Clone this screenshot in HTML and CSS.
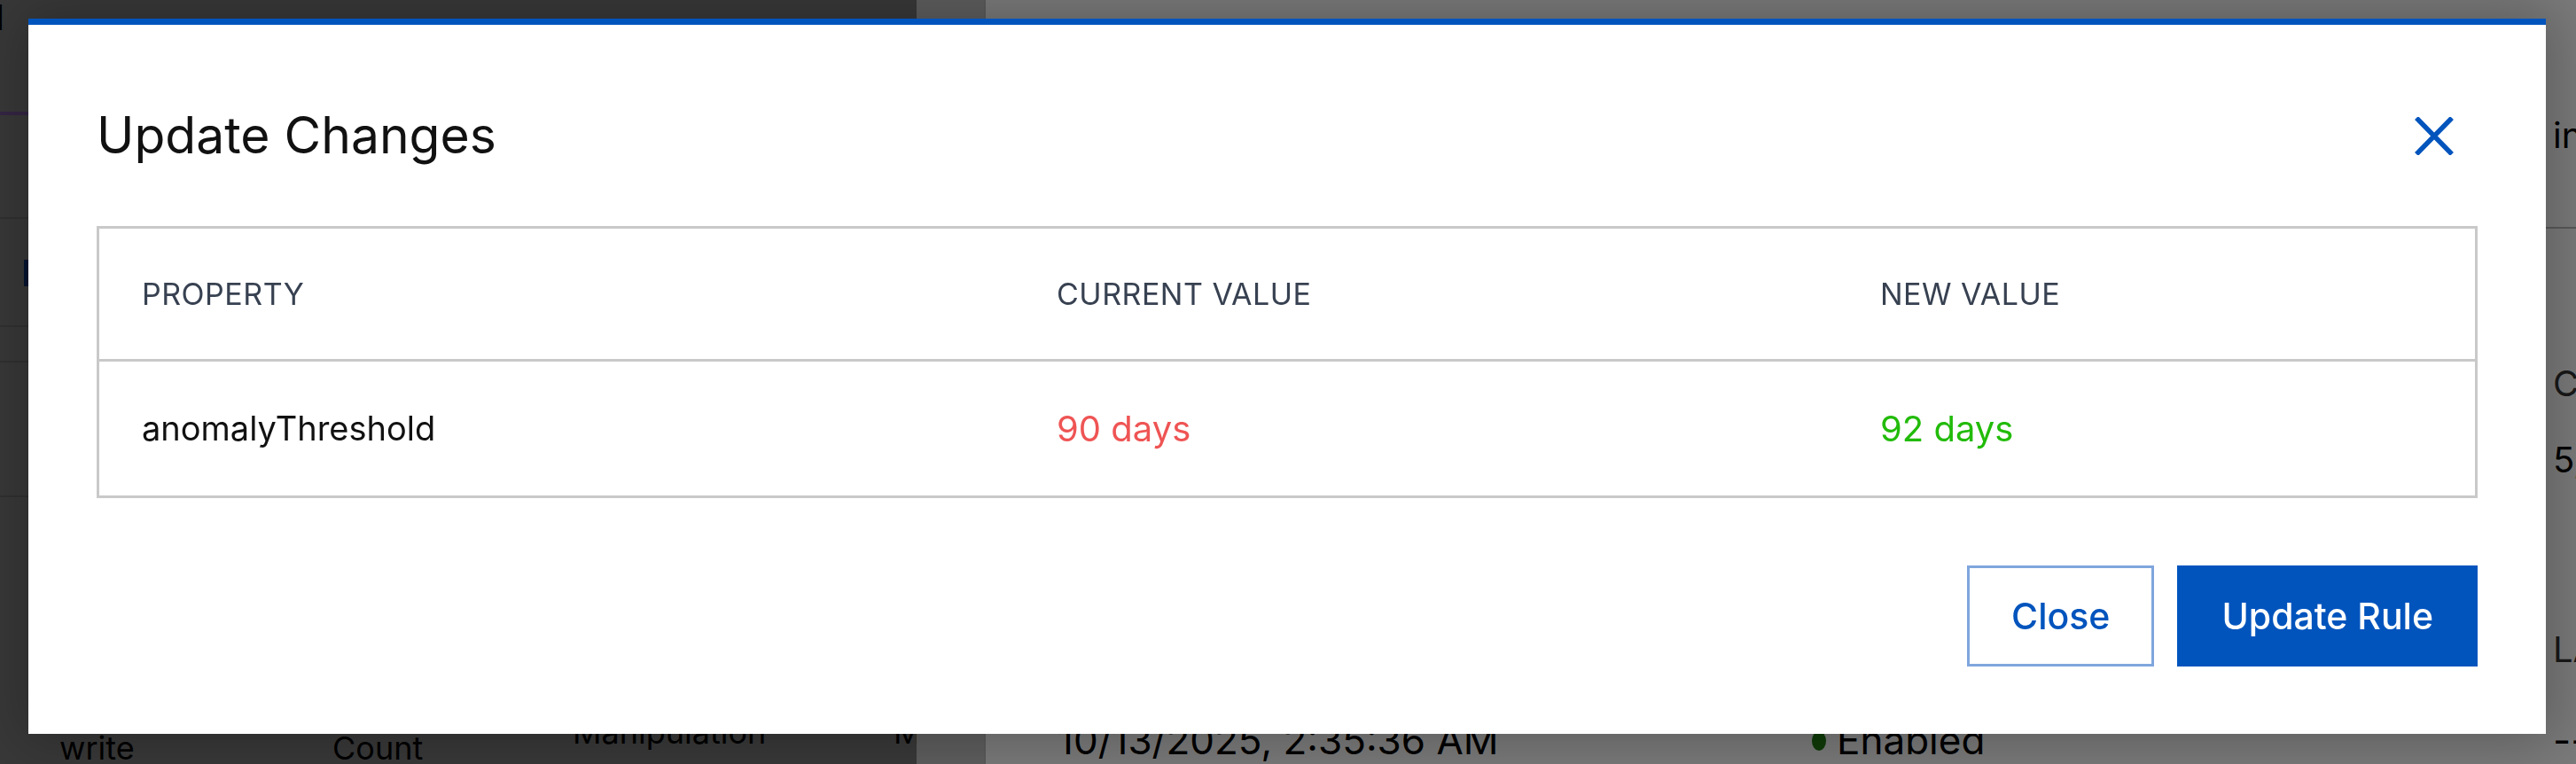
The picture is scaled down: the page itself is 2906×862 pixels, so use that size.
FILE: index.html
```html
<!DOCTYPE html>
<html lang="en">

<head>
    <meta charset="UTF-8">
    <meta name="viewport" content="width=device-width, initial-scale=1.0">
    <title>Rule Details</title>
    <link rel="stylesheet" href="styles.css">
</head>

<body>

    <div class="page">
        <aside class="rules-pane">
            <div class="pane-head">Rules Dashboard</div>
            <div class="pane-row"></div>
            <div class="pane-row mark-row"><span class="tab-mark"></span></div>
            <div class="pane-row short"></div>
            <div class="pane-row mid"></div>
            <div class="rule-row">
                <span class="cell low">write</span>
                <span class="cell low">Count</span>
                <span class="cell">Manipulation</span>
                <span class="cell">M</span>
            </div>
        </aside>

        <main class="detail-pane">
            <div class="rail"></div>
            <div class="detail-body">
                <div class="detail-row head">
                    <span></span><span></span><span>in</span>
                </div>
                <div class="detail-row gap">
                    <span></span><span></span><span class="muted">C</span>
                </div>
                <div class="detail-row sub">
                    <span></span><span></span><span>5,</span>
                </div>
                <div class="detail-row gap wide">
                    <span></span><span></span><span class="muted">LA</span>
                </div>
                <div class="detail-row last">
                    <span>10/13/2025, 2:35:36 AM</span>
                    <span class="status"><i class="dot"></i>Enabled</span>
                    <span>--</span>
                </div>
            </div>
        </main>
    </div>

    <div class="overlay">
        <div class="modal">
            <div class="modal-header">
                <h2>Update Changes</h2>
                <button class="icon-btn" type="button" aria-label="Close">
                    <svg width="44" height="43" viewBox="0 0 44 43">
                        <path d="M2 1 L42 42 M42 1 L2 42" stroke="#0254bd" stroke-width="5.5" fill="none" />
                    </svg>
                </button>
            </div>

            <table class="changes">
                <thead>
                    <tr>
                        <th class="col-prop">PROPERTY</th>
                        <th class="col-current">CURRENT VALUE</th>
                        <th>NEW VALUE</th>
                    </tr>
                </thead>
                <tbody>
                    <tr>
                        <td class="prop">anomalyThreshold</td>
                        <td class="old">90 days</td>
                        <td class="new">92 days</td>
                    </tr>
                </tbody>
            </table>

            <div class="modal-footer">
                <button class="btn btn-outline" type="button">Close</button>
                <button class="btn btn-primary" type="button">Update Rule</button>
            </div>
        </div>
    </div>

</body>

</html>
```

FILE: styles.css
```css
body {
    font-family: Inter, "Noto Sans", sans-serif;
    margin: 0;
    padding: 0;
    height: 862px;
    overflow: hidden;
    background-color: #fff;
}

/* page behind the dialog */

.page {
    display: flex;
    height: 100%;
}

.rules-pane {
    width: 1034px;
    flex-shrink: 0;
    background-color: #767676;
    display: flex;
    flex-direction: column;
}

.pane-head {
    height: 130px;
    box-sizing: border-box;
    padding: 0 0 0 14px;
    font-size: 40px;
    line-height: 40px;
    margin-left: -330px;
    border-bottom: 4px solid #6f4f8f;
    color: #000;
}

.pane-row {
    height: 115px;
    border-bottom: 2px solid #666;
}

.mark-row {
    height: 120px;
    position: relative;
}

.tab-mark {
    position: absolute;
    left: 27px;
    top: 46px;
    width: 8px;
    height: 30px;
    background-color: #0b2a66;
}

.pane-row.short {
    height: 38px;
}

.pane-row.mid {
    height: 150px;
}

.rule-row {
    flex: 1;
    display: grid;
    grid-template-columns: 308px 271px 362px 1fr;
    padding: 0 0 0 67px;
    align-items: end;
    font-size: 36px;
    color: #000;
}

.rule-row .cell {
    padding-bottom: 14px;
    white-space: nowrap;
}

.rule-row .cell.low {
    padding-bottom: 0;
    margin-bottom: -4px;
}

.detail-pane {
    flex: 1;
    display: flex;
    background-color: #fff;
}

.rail {
    width: 76px;
    border-right: 2px solid #bdbdbd;
    background-color: #c4c4c4;
}

.detail-body {
    flex: 1;
    display: flex;
    flex-direction: column;
    padding-left: 81px;
    font-size: 40px;
    color: #000;
}

.detail-row {
    display: grid;
    grid-template-columns: 851px 836px 1fr;
    white-space: nowrap;
}

.detail-row.head {
    padding-top: 128px;
    height: 128px;
    border-bottom: 2px solid #bbb;
    margin-left: -81px;
    padding-left: 81px;
}

.detail-row.gap {
    padding-top: 150px;
}

.detail-row.sub {
    padding-top: 37px;
}

.detail-row.gap.wide {
    padding-top: 165px;
}

.detail-row.last {
    margin-top: auto;
    margin-bottom: 0;
    font-size: 44px;
    line-height: 1.2;
}

.muted {
    color: #333;
}

.status {
    display: flex;
    align-items: center;
    padding-left: 28px;
}

.dot {
    width: 16px;
    height: 22px;
    border-radius: 50%;
    background-color: #1f7a12;
    margin: 0 12px 0 -28px;
}

/* dialog */

.overlay {
    position: fixed;
    inset: 0;
    background-color: rgba(0, 0, 0, 0.52);
    display: flex;
    justify-content: center;
    align-items: flex-start;
    padding-top: 21px;
}

.modal {
    width: 2840px;
    margin-left: -2px;
    background-color: #fff;
    border-top: 7px solid #0254bd;
    box-shadow: 0 0 60px 10px rgba(0, 0, 0, 0.25);
    padding: 0 77px;
    box-sizing: border-box;
}

.modal-header {
    display: flex;
    justify-content: space-between;
    align-items: center;
    padding-top: 91px;
    margin-bottom: 68px;
}

.modal-header h2 {
    margin: 0;
    font-size: 57px;
    font-weight: 400;
    line-height: 68px;
    color: #111;
}

.icon-btn {
    width: 98px;
    height: 98px;
    margin: -15px 0;
    padding: 0;
    border: none;
    background: none;
    cursor: pointer;
    display: flex;
    align-items: center;
    justify-content: center;
}

.changes {
    width: 100%;
    border-collapse: collapse;
    border: 3px solid #c9c9c9;
}

.changes th {
    text-align: left;
    font-size: 34px;
    font-weight: 400;
    letter-spacing: 0.5px;
    line-height: 51px;
    padding: 48px 48px;
    color: #374151;
    border-bottom: 3px solid #c9c9c9;
}

.changes .col-prop {
    width: 936px;
}

.changes .col-current {
    width: 833px;
}

.changes td {
    font-size: 40px;
    line-height: 55px;
    padding: 48px 48px;
    color: #111;
}

.changes td.prop {
    font-size: 38px;
}

.changes td.old {
    color: #ef5454;
}

.changes td.new {
    color: #22bb0a;
}

.modal-footer {
    display: flex;
    justify-content: flex-end;
    gap: 26px;
    padding: 76px 0;
}

.btn {
    height: 114px;
    padding: 0 47px;
    font-family: Inter, "Noto Sans", sans-serif;
    font-size: 41px;
    font-weight: 500;
    border: 3px solid transparent;
    border-radius: 0;
    cursor: pointer;
}

.btn-outline {
    background-color: #fff;
    color: #0254bd;
    border-color: #7fa6dd;
}

.btn-primary {
    background-color: #0254bd;
    color: #fff;
}

.btn-primary:hover {
    background-color: #0048a3;
}
```
